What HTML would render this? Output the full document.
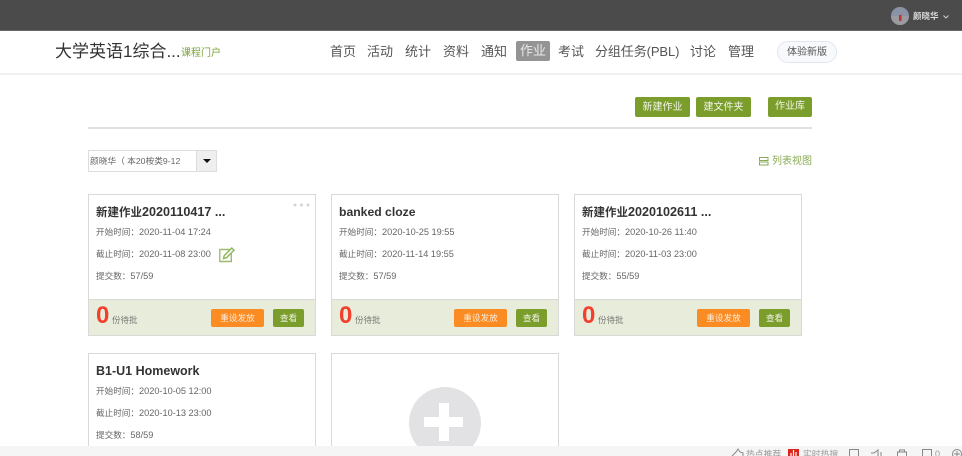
<!DOCTYPE html>
<html lang="zh"><head><meta charset="utf-8"><style>
html,body{margin:0;padding:0;width:962px;height:456px;overflow:hidden}
body{position:relative;background:#fff;font-family:"Liberation Sans","Noto Sans CJK SC",sans-serif;color:#555}
#w{position:absolute;left:0;top:0;width:962px;height:456px;overflow:hidden;background:#fff}
.a{position:absolute;white-space:nowrap}
.nav{top:42px;font-size:13px;line-height:20px;color:#555}
.btn{position:absolute;top:97px;height:20px;background:#7a9d2b;border-radius:2px;color:#f2f5e8;font-size:10px;line-height:21px;text-align:center}
.card{position:absolute;box-sizing:border-box;width:228px;border:1px solid #d9d9d9;background:#fff}
.t{position:absolute;left:7px;top:9px;font-size:12.6px;font-weight:bold;color:#333;line-height:16px;white-space:nowrap}
.t span{font-size:11.5px}
.l{position:absolute;left:7px;font-size:9.2px;line-height:12px;color:#666;white-space:nowrap}
.l span{font-size:8.6px;font-family:"Liberation Sans","Noto Sans CJK TC",sans-serif}
.f{position:absolute;left:0;right:0;top:104px;height:36px;background:#e8eddb;border-top:1px solid #d8d8d8;box-sizing:border-box}
.z{position:absolute;left:7px;top:2px;font-size:24px;font-weight:bold;line-height:28px;color:#f2402f}
.w{position:absolute;left:23px;top:14px;font-size:8.5px;line-height:12px;color:#777}
.o{position:absolute;left:122px;top:9px;width:53px;height:18px;background:#fb8b23;border-radius:2px;color:#fbeedd;font-size:8.6px;line-height:18px;text-align:center}
.v{position:absolute;left:184px;top:9px;width:31px;height:18px;background:#7a9d2b;border-radius:2px;color:#f2f5e8;font-size:8.6px;line-height:18px;text-align:center}
.cut{height:93px;border-bottom:0}
</style></head><body><div id="w">
<div class="a" style="left:0;top:0;width:962px;height:31px;background:#4b4b4b;border-bottom:1px solid #666;box-sizing:border-box"></div>
<svg class="a" style="left:891px;top:7px" width="18" height="18" viewBox="0 0 18 18"><circle cx="9" cy="9" r="9" fill="#8a93a5"/><path d="M0 9h18A9 9 0 0 1 0 9z" fill="#9a9aa0"/><rect x="8" y="8" width="2.500" height="6" fill="#b33"/></svg>
<div class="a" style="left:913px;top:11px;font-size:8.500px;font-weight:bold;line-height:11px;color:#dedede">颜晓华</div>
<svg class="a" style="left:943px;top:15px" width="6" height="4" viewBox="0 0 6 4"><path d="M.5.500L3 3 5.500.500" fill="none" stroke="#ccc" stroke-width="1"/></svg>
<div class="a" style="left:0;top:73px;width:962px;height:2px;background:#f1f1f1"></div>
<div class="a" style="left:55px;top:41px;font-size:17px;line-height:22px;color:#333">大学英语1综合...</div>
<div class="a" style="left:181px;top:47px;font-size:10px;line-height:14px;color:#7aa23a">课程门户</div>
<div class="a nav" style="left:330px">首页</div>
<div class="a nav" style="left:367px">活动</div>
<div class="a nav" style="left:405px">统计</div>
<div class="a nav" style="left:443px">资料</div>
<div class="a nav" style="left:481px">通知</div>
<div class="a nav" style="left:516px;top:41px;width:34px;height:20px;background:#949494;border-radius:2px;color:#e8e8e8;text-align:center">作业</div>
<div class="a nav" style="left:558px">考试</div>
<div class="a nav" style="left:595px;letter-spacing:-.1px">分组任务(PBL)</div>
<div class="a nav" style="left:690px">讨论</div>
<div class="a nav" style="left:728px">管理</div>
<div class="a" style="left:777px;top:41px;width:60px;height:22px;box-sizing:border-box;border:1px solid #dfe6f2;border-radius:11px;background:#f7f9fc;font-size:10px;line-height:22px;text-align:center;color:#555">体验新版</div>
<div class="btn" style="left:635px;width:55px">新建作业</div>
<div class="btn" style="left:696px;width:55px">建文件夹</div>
<div class="btn" style="left:768px;width:44px;line-height:20px">作业库</div>
<div class="a" style="left:88px;top:127px;width:724px;height:2px;background:#e0e0e0"></div>
<div class="a" style="left:88px;top:150px;width:129px;height:22px;box-sizing:border-box;border:1px solid #ddd;background:#fff"></div>
<div class="a" style="left:90px;top:155px;font-size:8.700px;line-height:12px;color:#666">颜晓华（ 本20桉类9-12</div>
<div class="a" style="left:196px;top:151px;width:20px;height:20px;background:#efefef;border-left:1px solid #ddd;box-sizing:border-box"></div>
<div class="a" style="left:203px;top:159px;width:0;height:0;border:4px solid transparent;border-top:4px solid #111;border-bottom:0"></div>
<svg class="a" style="left:759px;top:157px" width="10" height="9" viewBox="0 0 10 9"><rect x=".5" y=".5" width="8.500" height="3" fill="none" stroke="#8aab55"/><rect x=".5" y="5" width="8.500" height="3" fill="none" stroke="#8aab55"/></svg>
<div class="a" style="left:772px;top:155px;font-size:10px;line-height:14px;color:#8aab55">列表视图</div>

<div class="card" style="left:88px;top:194px;height:142px">
<div class="t"><span>新建作业</span>2020110417 ...</div>
<svg class="a" style="left:204px;top:8px" width="18" height="4" viewBox="0 0 18 4"><circle cx="2" cy="2" r="1.500" fill="#d4d4d4"/><circle cx="8.500" cy="2" r="1.500" fill="#d4d4d4"/><circle cx="15" cy="2" r="1.500" fill="#d4d4d4"/></svg>
<div class="l" style="top:31px"><span>开始时间：</span>2020-11-04 17:24</div>
<div class="l" style="top:53px"><span>截止时间：</span>2020-11-08 23:00</div>
<svg class="a" style="left:130px;top:52px" width="16" height="16" viewBox="0 0 16 16"><path d="M10.500 2.500H.8v12h11.500V7" fill="none" stroke="#9cbd6e" stroke-width="1.400"/><path d="M4.500 11.500l.8-3L12.800 1l2.200 2.200-7.500 7.500z" fill="none" stroke="#8db35c" stroke-width="1.400"/></svg>
<div class="l" style="top:75px"><span>提交数：</span>57/59</div>
<div class="f"><div class="z">0</div><div class="w">份待批</div><div class="o">重设发放</div><div class="v">查看</div></div>
</div>
<div class="card" style="left:331px;top:194px;height:142px">
<div class="t" style="font-size:12.200px">banked cloze</div>
<div class="l" style="top:31px"><span>开始时间：</span>2020-10-25 19:55</div>
<div class="l" style="top:53px"><span>截止时间：</span>2020-11-14 19:55</div>
<div class="l" style="top:75px"><span>提交数：</span>57/59</div>
<div class="f"><div class="z">0</div><div class="w">份待批</div><div class="o">重设发放</div><div class="v">查看</div></div>
</div>
<div class="card" style="left:574px;top:194px;height:142px">
<div class="t"><span>新建作业</span>2020102611 ...</div>
<div class="l" style="top:31px"><span>开始时间：</span>2020-10-26 11:40</div>
<div class="l" style="top:53px"><span>截止时间：</span>2020-11-03 23:00</div>
<div class="l" style="top:75px"><span>提交数：</span>55/59</div>
<div class="f"><div class="z">0</div><div class="w">份待批</div><div class="o">重设发放</div><div class="v">查看</div></div>
</div>
<div class="card cut" style="left:88px;top:353px">
<div class="t" style="font-size:12.500px">B1-U1 Homework</div>
<div class="l" style="top:31px"><span>开始时间：</span>2020-10-05 12:00</div>
<div class="l" style="top:53px"><span>截止时间：</span>2020-10-13 23:00</div>
<div class="l" style="top:75px"><span>提交数：</span>58/59</div>
</div>
<div class="card cut" style="left:331px;top:353px;overflow:hidden">
<div class="a" style="left:77px;top:33px;width:72px;height:72px;border-radius:50%;background:#e2e2e4"></div>
<div class="a" style="left:92px;top:63px;width:39px;height:10px;background:#fff"></div>
<div class="a" style="left:107px;top:49px;width:10px;height:38px;background:#fff"></div>
</div>

<div class="a" style="left:0;top:446px;width:962px;height:10px;background:#f5f5f5;overflow:hidden">
<svg class="a" style="left:731px;top:2px" width="14" height="8" viewBox="0 0 14 8"><path d="M1 8L5 4l2-3 2 3 3 1v3" fill="none" stroke="#888"/></svg>
<div class="a" style="left:746px;top:0;height:10px;overflow:hidden"><div style="margin-top:2px;font-size:8.800px;line-height:12px;color:#999">热点推荐</div></div>
<div class="a" style="left:788px;top:3px;width:11px;height:7px;background:#d9251c"></div>
<svg class="a" style="left:788px;top:3px" width="11" height="7" viewBox="0 0 11 7"><path d="M3 4v3M5.500 1v6M8 3v4" stroke="#fff" stroke-width="1.200"/></svg>
<div class="a" style="left:803px;top:0;height:10px;overflow:hidden"><div style="margin-top:2px;font-size:8.800px;line-height:12px;color:#999">实时热搜</div></div>
<svg class="a" style="left:848px;top:3px" width="114" height="7" viewBox="0 0 114 7"><rect x="1.500" y=".5" width="9" height="10" fill="none" stroke="#888"/><path d="M23 4h3l4-3v10M33 3v6" fill="none" stroke="#888"/><path d="M49.500 3h9v8h-9zM51.500 3V1h5v2" fill="none" stroke="#888"/><rect x="74.500" y=".5" width="9" height="10" fill="none" stroke="#888"/><circle cx="109" cy="5" r="4.500" fill="none" stroke="#888"/><path d="M109 2v6M106 5h6" stroke="#888"/></svg>
<div class="a" style="left:935px;top:0;height:10px;overflow:hidden"><div style="margin-top:2px;font-size:9px;line-height:12px;color:#999">0</div></div>
</div>
</div></body></html>
